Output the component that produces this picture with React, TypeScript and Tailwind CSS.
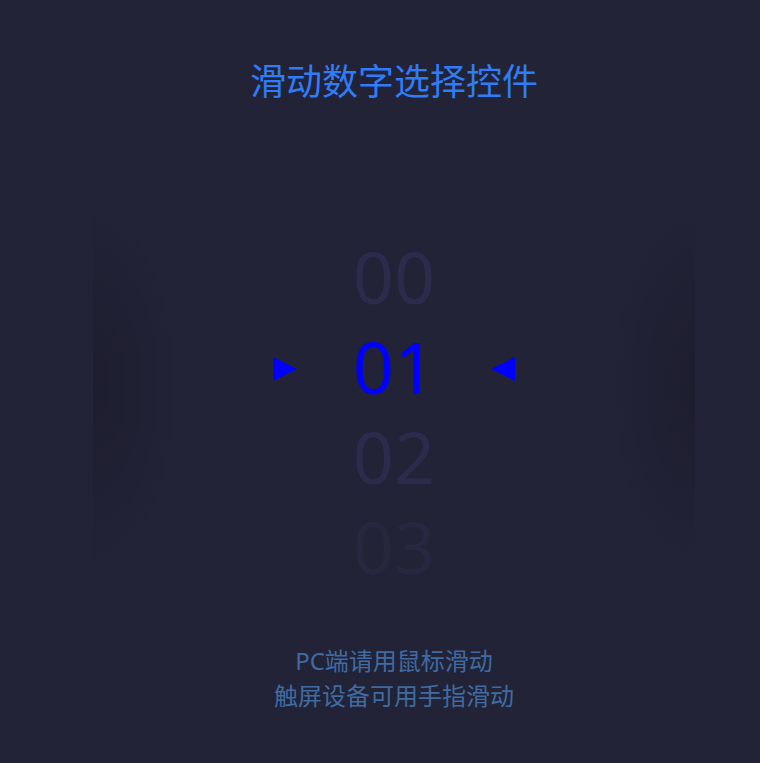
import { useState } from "react";

const digits = ["00", "01", "02", "03"];

// faded colours for rows around the selected one
const rowTone: Record<number, string> = {
  0: "text-[#2b2c4b]",
  2: "text-[#2b2c4b]",
  3: "text-[#27283f]",
};

const Arrow = ({ dir }: { dir: "right" | "left" }) => (
  <svg width="24" height="24" viewBox="0 0 24 24" className="mt-[6px]">
    {dir === "right" ? (
      <polygon points="0,0 24,12 0,24" fill="#0000ff" />
    ) : (
      <polygon points="24,0 0,12 24,24" fill="#0000ff" />
    )}
  </svg>
);

export default function App() {
  const [selected] = useState(1);

  return (
    <div
      className="min-h-screen bg-[#222337] pl-[28px] flex flex-col items-center"
      style={{ fontFamily: '"Noto Sans", "Noto Sans CJK SC", sans-serif' }}
    >
      <h1 className="pt-[58px] text-[36px] leading-[48px] text-[#2f7cf6] font-normal">
        滑动数字选择控件
      </h1>

      {/* picker wheel */}
      <div className="relative mt-[84px] h-[393px] w-[602px]">
        {/* cylinder shading on both edges */}
        <div className="absolute left-0 top-0 bottom-0 w-[90px] bg-[radial-gradient(ellipse_at_left,rgba(0,0,0,0.16),transparent_70%)]" />
        <div className="absolute right-0 top-0 bottom-0 w-[90px] bg-[radial-gradient(ellipse_at_right,rgba(0,0,0,0.16),transparent_70%)]" />

        <div className="relative flex flex-col items-center pt-[41px]">
          {digits.map((d, i) =>
            i === selected ? (
              <div key={d} className="flex h-[90px] items-center gap-[56px]">
                <Arrow dir="right" />
                <span className="text-[72px] leading-[90px] text-[#0000ff]">{d}</span>
                <Arrow dir="left" />
              </div>
            ) : (
              <div key={d} className={`h-[90px] text-[72px] leading-[90px] ${rowTone[i]}`}>
                {d}
              </div>
            )
          )}
        </div>
      </div>

      <div className="mt-[60px] flex flex-col items-center text-[24px] leading-[35px] text-[#3f6ba2]">
        <p>PC端请用鼠标滑动</p>
        <p>触屏设备可用手指滑动</p>
      </div>
    </div>
  );
}
